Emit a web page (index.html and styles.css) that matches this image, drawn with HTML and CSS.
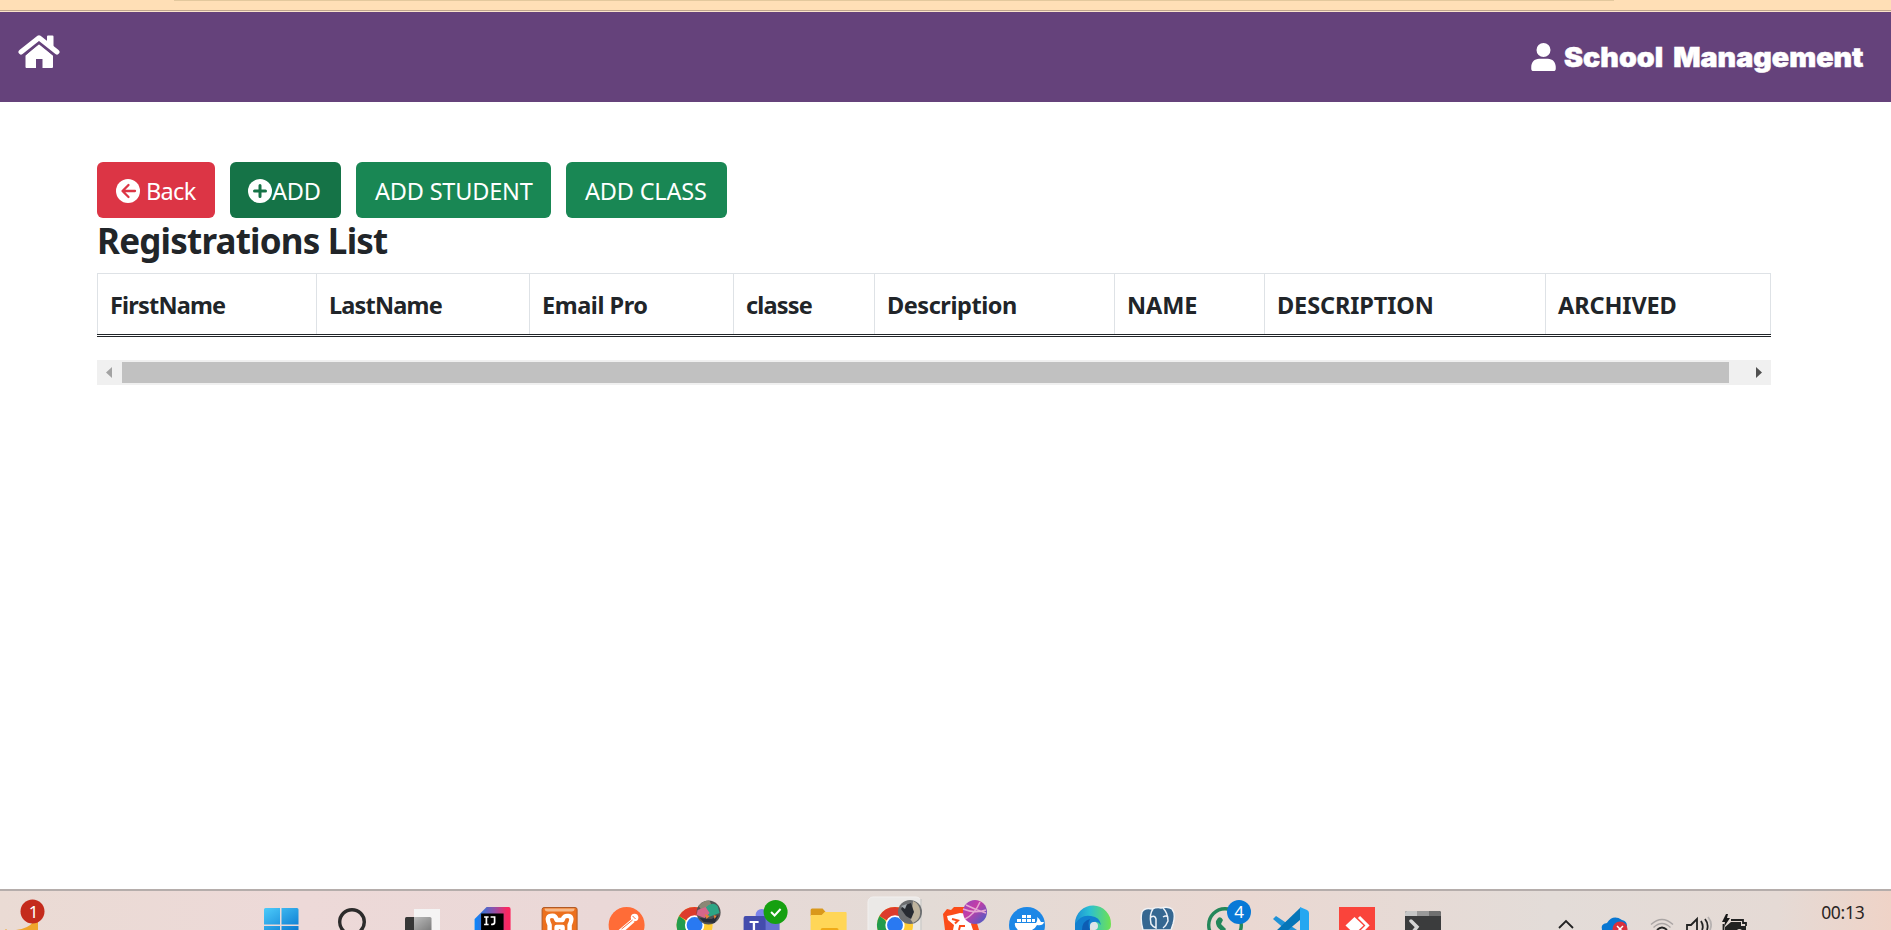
FILE: index.html
```html
<!DOCTYPE html>
<html lang="en">
<head>
<meta charset="utf-8">
<title>School Management</title>
<link rel="stylesheet" href="styles.css">
</head>
<body>
<div class="chrome-strip"><div class="chrome-line"></div></div>
<header class="navbar">
  <svg class="home" width="42" height="34" viewBox="0 0 42 34"><path d="M3 17 21 2.800 39 17" fill="none" stroke="#fff" stroke-width="5" stroke-linejoin="round" stroke-linecap="round"/><path d="M29 1.500q0-1 1-1h4.500q1 0 1 1V15L29 9.500zM21 8.500 35 20.500V32q0 1-1 1H24.500V24H18v9H8.500q-1 0-1-1V20.500z" fill="#fff"/><path d="M6 20.500 21 8.300 36 20.500" fill="none" stroke="#65427b" stroke-width="1.500"/></svg>
  <div class="brand">
    <svg width="25" height="28" viewBox="0 0 448 512"><path fill="#fff" d="M224 256A128 128 0 1 0 224 0a128 128 0 1 0 0 256zm-80 32C60 288 0 354 0 434v36c0 25 15 42 40 42h368c25 0 40-17 40-42v-36c0-80-60-146-144-146z"/></svg>
    <span class="brand-name">School Management</span>
  </div>
</header>
<main class="page">
  <div class="actions">
    <a class="btn danger"><svg width="24" height="24" viewBox="0 0 24 24"><circle cx="12" cy="12" r="12" fill="#fff"/><path d="M12.500 6 6.500 12l6 6M7 12h12" fill="none" stroke="#dc3545" stroke-width="2.300" stroke-linecap="round" stroke-linejoin="round"/></svg><span class="label back">Back</span></a>
    <a class="btn active"><svg width="24" height="24" viewBox="0 0 24 24"><circle cx="12" cy="12" r="12" fill="#fff"/><path d="M12 6.500v11M6.500 12h11" stroke="#157347" stroke-width="3" stroke-linecap="round"/></svg><span class="label">ADD</span></a>
    <a class="btn student"><span class="label">ADD STUDENT</span></a>
    <a class="btn class"><span class="label">ADD CLASS</span></a>
  </div>
  <h2 class="title">Registrations List</h2>
  <div class="table">
    <div class="th">FirstName</div><div class="th">LastName</div><div class="th wide">Email Pro</div><div class="th">classe</div><div class="th wide">Description</div><div class="th caps">NAME</div><div class="th caps">DESCRIPTION</div><div class="th caps">ARCHIVED</div>
  </div>
  <div class="scrollbar">
    <svg width="25" height="25" viewBox="0 0 25 25"><path d="M15 7v11l-6-5.500z" fill="#a3a3a3"/></svg>
    <div class="thumb"></div>
    <svg width="25" height="25" viewBox="0 0 25 25"><path d="M10 7v11l6-5.500z" fill="#505050"/></svg>
  </div>
</main>
<footer class="taskbar">
  <svg class="weather" width="60" height="39" viewBox="0 0 60 39"><path d="M38 30v9H16q12-1 18-9zM6 38l1 1H5z" fill="#f0a52c"/><circle cx="32.500" cy="20.500" r="12" fill="#c42b1c"/><text x="33.500" y="26.500" font-size="17" class="badge-text">1</text></svg>
  <div class="apps apps-a">
    <svg class="app" viewBox="0 0 60 39"><defs><linearGradient id="w" x2="1" y2="1"><stop stop-color="#4ccbfa"/><stop offset="1" stop-color="#0b79d0"/></linearGradient></defs><path d="M13 18.500q0-1.500 1.500-1.500H29v16.500H13zM30.500 17H46q1.500 0 1.500 1.500v15h-17zM13 35h16v4H13zM30.500 35h17v4h-17z" fill="url(#w)"/></svg>
    <svg class="app" viewBox="0 0 60 39"><circle cx="31" cy="31" r="12.300" fill="none" stroke="#2c2b2b" stroke-width="3.400"/></svg>
    <svg class="app" viewBox="0 0 60 39"><defs><linearGradient id="tv" x2="1" y2="1"><stop stop-color="#bbb"/><stop offset="1" stop-color="#7d7d7d"/></linearGradient></defs><rect x="14" y="26" width="20" height="20" rx="1.500" fill="#373737"/><path d="M23 18h26v21H23z" fill="#f5f4f4"/><path d="M23 26h16q1.500 0 1.500 1.500V39H23z" fill="url(#tv)"/></svg>
  </div>
  <div class="apps apps-b">
    <svg class="app" viewBox="0 0 60 39"><defs><linearGradient id="ij" x2="1"><stop stop-color="#0787ff"/><stop offset=".2" stop-color="#3573d9"/><stop offset=".55" stop-color="#9250a8"/><stop offset=".9" stop-color="#fb2761"/></linearGradient></defs><path d="M12 28l12-12h22q2 0 2 2v21H12z" fill="url(#ij)"/><path d="M18.500 22.500h22.500V39H18.500z"/><path d="M21.500 26h4.500m-2.200 0v7.500m-2.300 0H26M28 26h4v5.500q0 2-3.500 2" fill="none" stroke="#fff" stroke-width="1.700"/></svg>
    <svg class="app" viewBox="0 0 60 39"><rect x="12.500" y="16.500" width="35" height="28" rx="2" fill="#ec701d" stroke="#b05a26"/><path d="M15 17.500h30q0 3-3 3H18q-3 0-3-3" fill="#f5b98a"/><path d="M20 40v-6q-4-8 1-9 5-1 6 4h6q1-5 6-4 5 1 1 9v6M27 40v-4h6v4" fill="none" stroke="#fff" stroke-width="4.400" stroke-linejoin="round"/></svg>
    <svg class="app" viewBox="0 0 60 39"><circle cx="30" cy="34" r="18" fill="#ff6c37"/><path d="M22 39l13-11 3 3-9 8z" fill="#fff"/><circle cx="38" cy="26.500" r="3.800" fill="#fff"/><path d="M25 38l11-9M36 25l3 3" stroke="#ff6c37"/></svg>
    <svg class="app" viewBox="0 0 60 39"><circle cx="30" cy="34" r="18" fill="#fc3"/><path d="M30 34 14.400 25A18 18 0 0 1 45.600 25z" fill="#dd3b2c"/><path d="M14.400 25A18 18 0 0 0 13 40h12l-5-11z" fill="#229c4d"/><path d="M30 25h16v4H30z" fill="#fcc52b"/><circle cx="30" cy="34" r="8.800" fill="#2979f2" stroke="#fff" stroke-width="1.700"/><circle cx="44" cy="21.500" r="12" fill="#515253"/><path d="M34 15q5-6 11-5l4 8-10 4z" fill="#8b8775"/><path d="M39 19q8-10 14-4l2 7-11 4z" fill="#2ca585"/><path d="M33 19l8-3 4 6-5 5-8-3z" fill="#d6668a"/><path d="M35 27l12 1 7-4-4 8-11-1z" fill="#272d3b"/><path d="M40 23l5 2-3 3zM49 24l3 1-2 3z" fill="#e98236"/></svg>
    <svg class="app" viewBox="0 0 60 39"><circle cx="30" cy="24" r="6" fill="#7b83eb"/><rect x="24" y="27" width="24" height="18" fill="#6671d0"/><rect x="12" y="25" width="22" height="18" rx="2" fill="#444cad"/><path d="M18 30h9v2h-3.500v7h-2.300v-7H18z" fill="#fff"/><circle cx="44" cy="21" r="12" fill="#16a011"/><path d="M39.500 21l3.500 3.500 6-6.500" fill="none" stroke="#fff" stroke-width="2"/></svg>
    <svg class="app" viewBox="0 0 60 39"><path d="M12 19q0-1.500 1.500-1.500H24l3 3.500-3 4H12z" fill="#d9981b"/><path d="M12 24h11l3-3h21q1 0 1 1v17H12z" fill="#ffd657"/><path d="M22 39q0-2 2-2h14q2 0 2 2z" fill="#f0aa17"/></svg>
  </div>
  <div class="apps apps-c">
    <svg class="app focused" viewBox="0 0 60 39"><rect x="3" y="6" width="53" height="45" rx="5" fill="#ebe9e7" stroke="#f2f0ef"/><path d="M56 8v31" stroke="#c8c6c3" stroke-width="1.300"/><circle cx="30" cy="34" r="18" fill="#fc3"/><path d="M30 34 14.400 25A18 18 0 0 1 45.600 25z" fill="#dd3b2c"/><path d="M14.400 25A18 18 0 0 0 13 40h12l-5-11z" fill="#229c4d"/><path d="M30 25h16v4H30z" fill="#fcc52b"/><circle cx="30" cy="34" r="8.800" fill="#2979f2" stroke="#fff" stroke-width="1.700"/><circle cx="45" cy="21" r="12" fill="#6c6e70"/><path d="M48 10a12 12 0 0 1 0 22l-4-6 3-7z" fill="#bfb49e"/><path d="M38 15l8-3 3 9-3 7-5-3-5-7z" fill="#272b31"/><path d="M36 15l6-2-2 5z" fill="#a1a8ad"/></svg>
    <svg class="app" viewBox="0 0 60 39"><path d="M12 23l4-5 4 1 3-3h14l6 6 5 17H14z" fill="#fb4c19"/><path d="M16 25l5-1 8-2 9 1 5 3-3 7 2 6H22l1-5-6-5z" fill="#fff"/><path d="M21 28l6 1.500-3 3M28 39l1-4h5" fill="none" stroke="#fb4c19" stroke-width="2"/><defs><linearGradient id="cr" x2="1" y2="1"><stop stop-color="#9147c0"/><stop offset=".4" stop-color="#c53ca6"/><stop offset="1" stop-color="#3b62ca"/></linearGradient></defs><circle cx="44" cy="21" r="12" fill="url(#cr)"/><path d="M32 18q12 5 23 1M34 28q10-5 15-17M35 14q10 5 20 8" stroke="#e6a8d3" stroke-width="1.500" fill="none"/></svg>
    <svg class="app" viewBox="0 0 60 39"><circle cx="30" cy="34" r="18" fill="#1c87e6"/><path d="M18 32h21q2-3 1-6 3 2 4 5h3q-1 4-7 3-2 4-5 5H21q-4-3-3-7M20 28h4v3h-4zM25 28h4v3h-4zM30 28h4v3h-4zM25 24h4v3h-4zM30 24h4v3h-4zM35 28h3v3h-3z" fill="#fff"/></svg>
    <svg class="app" viewBox="0 0 60 39"><defs><linearGradient id="ed" x2="1"><stop stop-color="#1c8fd6"/><stop offset=".4" stop-color="#2bbfd3"/><stop offset="1" stop-color="#6fe250"/></linearGradient></defs><path d="M12 39V32A18 18 0 0 1 48 33q0 6-4 6H32l2-5q-2-6-9-5z" fill="url(#ed)"/><path d="M12 33q6-10 16-8 9 1 10 9-3-4-7-3-5 2-4 8H12z" fill="#1280cf"/><path d="M19 39q0-9 8-11-3 5 0 11z" fill="#0d5db4"/><circle cx="31" cy="35" r="4" fill="#dde4e8"/></svg>
    <svg class="app" viewBox="0 0 60 39"><path d="M14 39q-3-11-1-18 3-5 10-3 5-2 9-1 7-2 11 1 4 5 1 15l-2 6z" fill="#356791" stroke="#f1f2f5" stroke-width="1.400"/><path d="M24 18q-4 5-2 15 2 3 5 4V28q-1-4-5-2M34 17q5 5 5 13-2 5-5 7m0-11q3-2 5 0" fill="none" stroke="#edf1f7" stroke-width="1.500"/></svg>
    <svg class="app" viewBox="0 0 60 39"><circle cx="30" cy="34" r="16.300" fill="none" stroke="#24875a" stroke-width="3.400"/><path d="M23 27q3-2 5 2l-2 4 5 5-2 3q-9-4-8-11z" fill="#24875a"/><circle cx="44" cy="21" r="12" fill="#0879d7"/><text x="44" y="27" font-size="17" class="badge-text">4</text></svg>
    <svg class="app" viewBox="0 0 60 39"><path d="M12 28l3-3 30 20-6 6z" fill="#2092d7"/><path d="M39 17v12L20 45l-6-4z" fill="#0575b8"/><path d="M39 16l7 3q2 1 2 3v17h-9z" fill="#25a7f1"/></svg>
    <svg class="app" viewBox="0 0 60 39"><path d="M12 16h36v23H12z" fill="#fa443b"/><path d="M18.500 34.500l9-8.500 9 8.500-9 8.500z" fill="#fff"/><path d="M32 26l8.500 8.500L32 43" fill="none" stroke="#fff" stroke-width="3"/></svg>
    <svg class="app" viewBox="0 0 60 39"><path d="M12 22q0-2 2-2h32q2 0 2 2v17H12z" fill="#3b3c3d"/><path d="M12 25v-3q0-2 2-2h10v5z" fill="#c6c6c6"/><path d="M24 20h12v5H24z" fill="#999"/><path d="M36 20h10q2 0 2 2v3H36z" fill="#707070"/><path d="M18 30l6 6-4 5" fill="none" stroke="#d5d5d5" stroke-width="3.500" stroke-linecap="round"/></svg>
  </div>
  <svg class="tray" width="200" height="39" viewBox="0 0 200 39"><g fill="none" stroke="#222" stroke-width="1.800"><path d="M10 37l7-7 7 7"/><path d="M108 39q5-5 10 0"/><path d="M102 33.500q11-10 22 0M104.500 36.500q8.500-8 17 0" stroke="#aaa5a4" stroke-width="1.400"/><path d="M138 39v-5h4l6-6v11M152 30q3 5 1 9M156 28q4 5 2 11"/><path d="M159 26q5 6 2 13" stroke="#b7b2b1"/></g><path d="M53 39q-2-6 5-7 6-9 15-3 5 1 5 6l-5 4z" fill="#0876d1"/><circle cx="71" cy="38" r="7.500" fill="#d9303c"/><path d="M68 35l6 6m0-6-6 6" stroke="#fff" stroke-width="1.500"/><path d="M177 23l-4 8h3l-1 5 6-9h-3l1-4z" fill="#181818"/><path d="M182 31h10v4l-4 4h-12v-3zM190 35h7v4h-4q-3-2-5 0z" fill="#222"/><path d="M174.500 33v6M182 29h12v3h3v3" fill="none" stroke="#222" stroke-width="1.800"/></svg>
  <span class="clock">00:13</span>
</footer>
</body>
</html>
```
FILE: styles.css
```css
* { box-sizing: border-box; }
body { margin: 0; height: 930px; display: flex; flex-direction: column; overflow: hidden; background: #fff; color: #212529; font-family: "Noto Sans", sans-serif; }
.chrome-strip { flex: none; height: 12px; background: linear-gradient(#ffdfb6 10px, #bda58c 10px, #bda58c 11px, #fbe3ca 11px); }
.chrome-line { height: 1px; margin: 0 277px 0 174px; background: #e3c89d; }
.navbar { flex: none; height: 90px; background: #65427b; display: flex; justify-content: space-between; align-items: flex-start; padding: 23px 27px 0 18px; }
.brand { display: flex; align-items: flex-start; gap: 8px; padding-top: 8px; }
.brand-name { width: 300px; color: #fff; font: 900 26.500px/28px Inter, sans-serif; white-space: nowrap; word-spacing: 4px; -webkit-text-stroke: 0.5px #fff; transform: scaleX(1.08); transform-origin: left; }
.page { flex: 1; padding: 60px 120px 0 97px; }
.actions { display: flex; gap: 15px; }
.btn { display: flex; align-items: center; height: 56px; border-radius: 6px; padding: 1px 0 0 19px; background: #198754; color: #fff; font-size: 23.500px; white-space: nowrap; }
.btn.danger { width: 118px; background: #dc3545; }
.btn.active { width: 111px; padding-left: 18px; background: #157347; }
.student { width: 195px; }
.class { width: 161px; }
.label { letter-spacing: -0.2px; }
.back { margin-left: 6px; letter-spacing: -0.7px; }
.title { margin: 0; height: 55px; padding-top: 1px; font-size: 35px; line-height: 44px; font-weight: 700; letter-spacing: -0.8px; }
.table { display: grid; grid-template-columns: 219px 213px 204px 141px 240px 150px 281px 226px; width: 1674px; height: 64px; border-top: 1px solid #dee2e6; border-bottom: 3px double #212529; }
.th { height: 60px; border-left: 1px solid #dee2e6; padding-left: 12px; font-size: 23.500px; line-height: 63px; font-weight: 700; letter-spacing: -0.8px; white-space: nowrap; }
.wide { letter-spacing: -0.45px; }
.caps { letter-spacing: -0.1px; }
.th:last-child { border-right: 1px solid #dee2e6; }
.scrollbar { display: flex; width: 1674px; height: 25px; margin-top: 23px; background: #f0f0f0; justify-content: space-between; }
.thumb { width: 1607px; height: 21px; margin: 2px 17px 0 0; background: #c1c1c1; }
.taskbar { flex: none; height: 41px; display: flex; border-top: 2px solid #b5adab; background: linear-gradient(90deg, #eadbd4, #edd9d8 16%, #ead8d7 32%, #e3dbd6 49%, #ead8d2 66%, #e3dcd8 82%, #e5dad5 94%, #efd3c7); overflow: hidden; }
.apps { display: flex; }
.app { height: 39px; width: 66px; flex: none; }
.weather { margin-right: 186px; }
.apps-a .app { width: 70px; }
.apps-b { margin-left: 3px; }
.apps-b .app { width: 67.200px; }
.tray { margin-left: 93px; }
.clock { margin-left: 72px; padding-top: 10px; font-size: 17.500px; line-height: 22px; letter-spacing: -0.3px; color: #2b2523; }
.badge-text { fill: #fff; text-anchor: middle; font-family: "Noto Sans", sans-serif; }
```
